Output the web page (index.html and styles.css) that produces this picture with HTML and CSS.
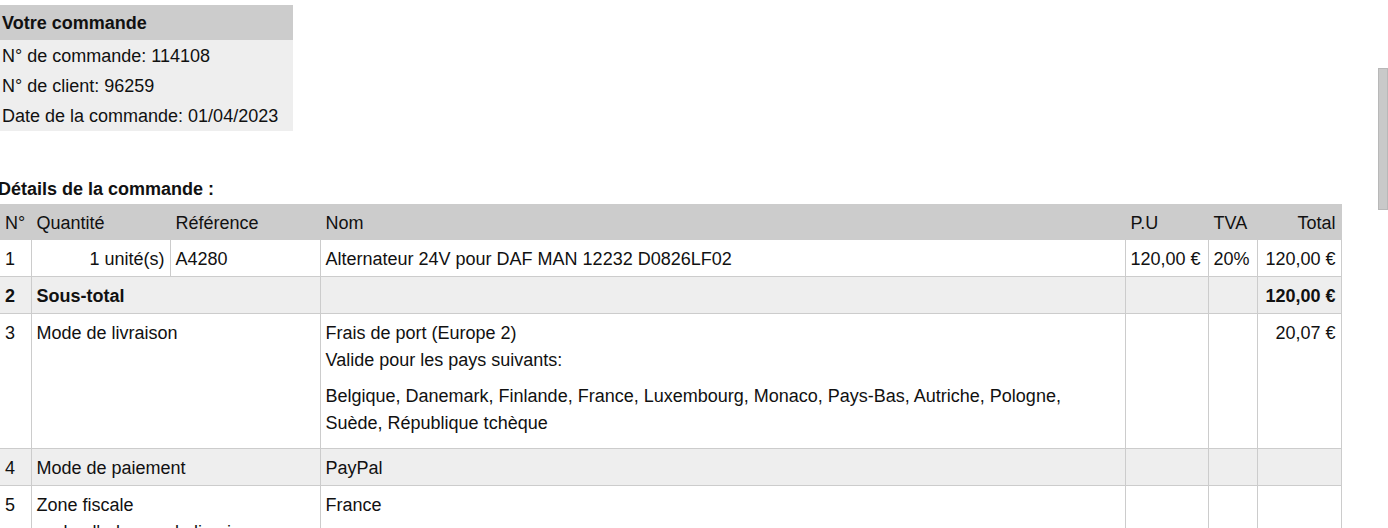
FILE: index.html
```html
<!DOCTYPE html>
<html lang="fr">
<head>
<meta charset="utf-8">
<title>Votre commande</title>
<link rel="stylesheet" href="styles.css">
</head>
<body>
<div class="page">
  <div class="order-box">
    <div class="order-head">Votre commande</div>
    <div class="order-body">
      <div class="order-line">N° de commande: 114108</div>
      <div class="order-line">N° de client: 96259</div>
      <div class="order-line">Date de la commande: 01/04/2023</div>
    </div>
  </div>

  <h3 class="details-title">Détails de la commande :</h3>

  <table class="details">
    <colgroup>
      <col class="c-num">
      <col class="c-qty">
      <col class="c-ref">
      <col class="c-name">
      <col class="c-pu">
      <col class="c-tva">
      <col class="c-total">
    </colgroup>
    <thead>
      <tr>
        <th>N°</th>
        <th>Quantité</th>
        <th>Référence</th>
        <th>Nom</th>
        <th>P.U</th>
        <th>TVA</th>
        <th class="right">Total</th>
      </tr>
    </thead>
    <tbody>
      <tr>
        <td>1</td>
        <td class="right">1 unité(s)</td>
        <td>A4280</td>
        <td>Alternateur 24V pour DAF MAN 12232 D0826LF02</td>
        <td>120,00 €</td>
        <td>20%</td>
        <td class="right">120,00 €</td>
      </tr>
      <tr class="alt bold">
        <td>2</td>
        <td colspan="2">Sous-total</td>
        <td></td>
        <td></td>
        <td></td>
        <td class="right">120,00 €</td>
      </tr>
      <tr>
        <td>3</td>
        <td colspan="2">Mode de livraison</td>
        <td>
          <div>Frais de port (Europe 2)</div>
          <div>Valide pour les pays suivants:</div>
          <p class="countries">Belgique, Danemark, Finlande, France, Luxembourg, Monaco, Pays-Bas, Autriche, Pologne,<br>Suède, République tchèque</p>
        </td>
        <td></td>
        <td></td>
        <td class="right">20,07 €</td>
      </tr>
      <tr class="alt">
        <td>4</td>
        <td colspan="2">Mode de paiement</td>
        <td>PayPal</td>
        <td></td>
        <td></td>
        <td></td>
      </tr>
      <tr>
        <td>5</td>
        <td colspan="2">Zone fiscale<div class="note">selon l'adresse de livraison</div></td>
        <td>France</td>
        <td></td>
        <td></td>
        <td></td>
      </tr>
    </tbody>
  </table>
</div>
<div class="scroll-thumb"></div>
</body>
</html>
```

FILE: styles.css
```css
html, body {
  margin: 0;
  padding: 0;
  background: #ffffff;
  overflow: hidden;
}

body {
  font-family: "Liberation Sans", Arial, sans-serif;
  font-size: 18px;
  color: #111111;
}

.page {
  padding-top: 5px;
}

.order-box {
  width: 293px;
}

.order-head {
  background: #cccccc;
  font-weight: bold;
  height: 35px;
  line-height: 36px;
  padding: 0 2px;
}

.order-body {
  background: #eeeeee;
  padding-bottom: 1px;
}

.order-line {
  line-height: 30px;
  padding: 1px 2px 0;
  height: 30px;
  box-sizing: border-box;
}

.details-title {
  font-size: 18px;
  font-weight: bold;
  line-height: 20px;
  margin: 48px 0 5px -2px;
}

.details {
  border-collapse: collapse;
  table-layout: fixed;
  width: 1341px;
}

.c-num { width: 31px; }
.c-qty { width: 139px; }
.c-ref { width: 150px; }
.c-name { width: 805px; }
.c-pu { width: 83px; }
.c-tva { width: 49px; }
.c-total { width: 84px; }

.details th,
.details td {
  border: 1px solid #cccccc;
  padding: 6px 5px 3px 5px;
  line-height: 27px;
  text-align: left;
  vertical-align: top;
  white-space: nowrap;
}

.details th:first-child,
.details td:first-child {
  border-left: none;
}

.details th {
  background: #cccccc;
  font-weight: normal;
  border-top: none;
  padding: 6px 5px 2px 5px;
}

.details tr.alt td {
  background: #eeeeee;
}

.details tr.bold td {
  font-weight: bold;
}

.details .right {
  text-align: right;
}

.countries {
  margin: 9px 0 8px;
}

.note {
  padding-left: 8px;
}

.scroll-thumb {
  position: absolute;
  left: 1378px;
  top: 68px;
  width: 10px;
  height: 142px;
  background: #c9c9c9;
  border: 1px solid #b8b8b8;
  box-sizing: border-box;
}
```
